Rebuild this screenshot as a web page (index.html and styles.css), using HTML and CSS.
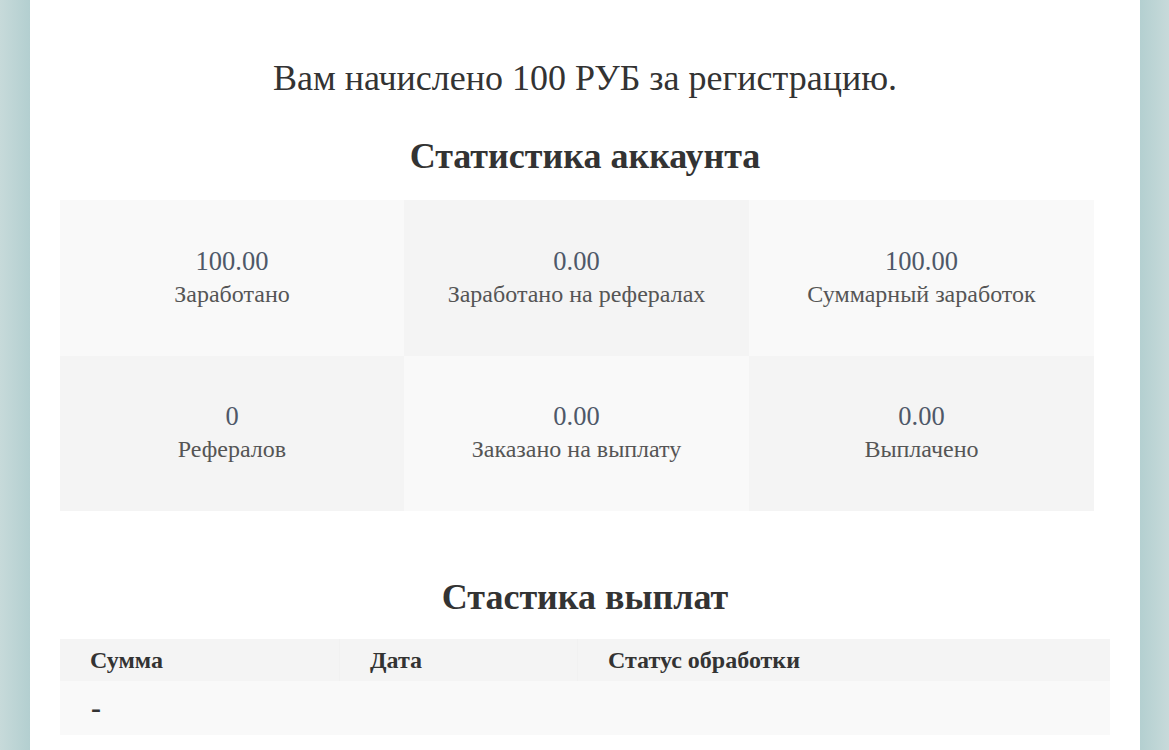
FILE: index.html
```html
<!DOCTYPE html>
<html lang="ru">
<head>
<meta charset="utf-8">
<title>Статистика</title>
<link rel="stylesheet" href="styles.css">
</head>
<body>
<div class="page">
  <p class="notice">Вам начислено 100 РУБ за регистрацию.</p>
  <h2 class="heading">Статистика аккаунта</h2>
  <div class="stats">
    <div class="cell light"><div class="num">100.00</div><div class="lbl">Заработано</div></div>
    <div class="cell dark"><div class="num">0.00</div><div class="lbl">Заработано на рефералах</div></div>
    <div class="cell light"><div class="num">100.00</div><div class="lbl">Суммарный заработок</div></div>
    <div class="cell dark"><div class="num">0</div><div class="lbl">Рефералов</div></div>
    <div class="cell light"><div class="num">0.00</div><div class="lbl">Заказано на выплату</div></div>
    <div class="cell dark"><div class="num">0.00</div><div class="lbl">Выплачено</div></div>
  </div>
  <h2 class="heading heading-pay">Стастика выплат</h2>
  <table class="pays">
    <thead>
      <tr><th class="c1">Сумма</th><th class="c2">Дата</th><th class="c3">Статус обработки</th></tr>
    </thead>
    <tbody>
      <tr><td class="dash">-</td><td></td><td></td></tr>
    </tbody>
  </table>
</div>
</body>
</html>
```
FILE: styles.css
```css
html, body {
  margin: 0;
  padding: 0;
  height: 100%;
}
body {
  background: linear-gradient(to right, #c7dada 0px, #b3cfd0 30px, #b3cfd0 1139px, #c7dada 1169px);
  font-family: "Liberation Serif", "Times New Roman", serif;
  overflow: hidden;
}
.page {
  box-sizing: border-box;
  width: 1110px;
  margin: 0 0 0 30px;
  padding: 56px 30px 0;
  background: #fff;
  height: 100%;
}
.notice {
  margin: 0;
  text-align: center;
  font-size: 36px;
  line-height: 44px;
  color: #333;
}
.heading {
  margin: 34px 0 0;
  text-align: center;
  font-size: 36px;
  line-height: 44px;
  font-weight: bold;
  color: #333;
}
.heading-pay {
  margin-top: 64px;
}
.stats {
  margin-top: 22px;
  width: 1034px;
  display: grid;
  grid-template-columns: 344px 345px 345px;
  grid-auto-rows: 155.5px;
}
.cell {
  display: flex;
  flex-direction: column;
  align-items: center;
  justify-content: center;
  text-align: center;
}
.light { background: #f9f9f9; }
.dark { background: #f4f4f4; }
.num {
  font-size: 26.5px;
  line-height: 32px;
  color: #4e5868;
}
.lbl {
  font-size: 24px;
  line-height: 34px;
  color: #555;
}
.pays {
  margin-top: 20px;
  width: 1050px;
  border-collapse: collapse;
  table-layout: fixed;
}
.pays th {
  background: #f4f4f4;
  height: 42px;
  padding: 0 0 0 30px;
  text-align: left;
  font-size: 24px;
  font-weight: bold;
  color: #333;
}
.pays th.c2 { border-left: 1px solid #f1f1f1; }
.pays th.c3 { border-left: 1px solid #f1f1f1; }
.c1 { width: 249px; }
.c2 { width: 207px; }
.pays td {
  background: #f9f9f9;
  height: 54px;
  padding: 0 0 0 31px;
  font-size: 30px;
  line-height: 30px;
  color: #333;
}
.dash { font-weight: bold; }
```
